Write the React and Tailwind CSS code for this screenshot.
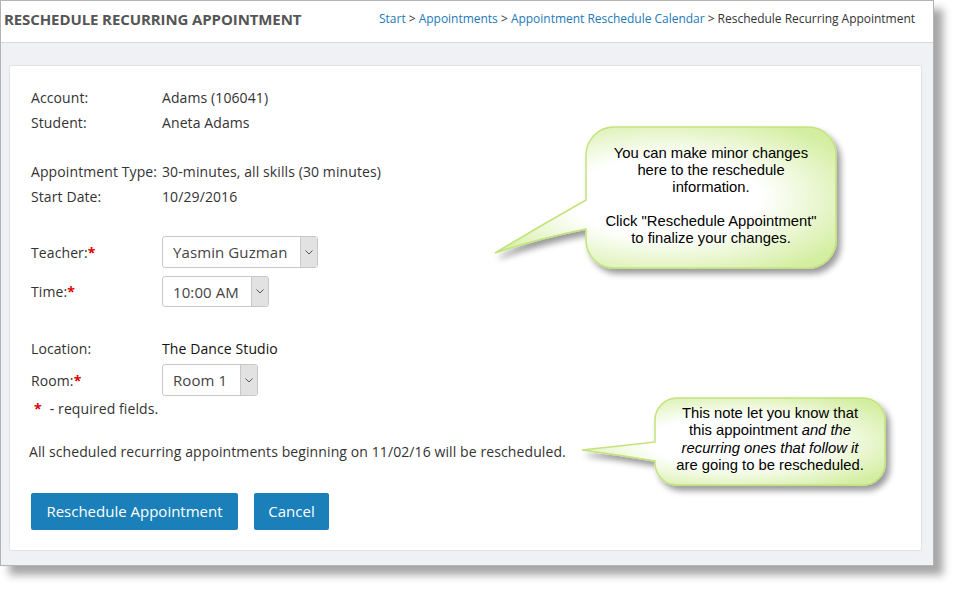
const Chevron = () => (
  <svg width="8" height="5" viewBox="0 0 8 5" fill="none">
    <path d="M0.5 0.5L4 4L7.5 0.5" stroke="#555" strokeWidth="1" />
  </svg>
)

const Select = ({ value, width }) => (
  <div
    className="flex h-full border border-[#c8c8c8] rounded-[3px] bg-white overflow-hidden"
    style={{ width }}
  >
    <div className="flex-1 flex items-center pl-[10px] pt-[1px] text-[15px] text-[#444]">{value}</div>
    <div className="w-[17px] bg-[#e2e2e2] border-l border-[#c8c8c8] flex items-center justify-center">
      <Chevron />
    </div>
  </div>
)

const Req = () => <span className="text-[#e00000] font-bold">*</span>

const Row = ({ label, children, className = 'h-[25px]' }) => (
  <div className={`flex items-center ${className}`}>
    <div className="w-[131px] shrink-0">{label}</div>
    <div className="h-full flex items-center">{children}</div>
  </div>
)

const Bubbles = () => (
  <svg className="absolute left-0 top-0 pointer-events-none" width="958" height="590">
    <defs>
      <radialGradient id="bubbleFill" cx="50%" cy="50%" r="62%">
        <stop offset="0.45" stopColor="#ffffff" />
        <stop offset="1" stopColor="#d3eea0" />
      </radialGradient>
      <filter id="bubbleShadow" x="-20%" y="-20%" width="140%" height="150%">
        <feDropShadow dx="4" dy="5" stdDeviation="3" floodColor="#000" floodOpacity="0.4" />
      </filter>
    </defs>
    <path
      d="M614 127 H808 A28 28 0 0 1 836 155 V240 A28 28 0 0 1 808 268 H614 A28 28 0 0 1 586 240 V229 Q540 238 495 253 Q540 226 586 200 V155 A28 28 0 0 1 614 127 Z"
      fill="url(#bubbleFill)"
      stroke="#c4e37c"
      strokeWidth="1.5"
      filter="url(#bubbleShadow)"
    />
    <path
      d="M677 398 H863 A22 22 0 0 1 885 420 V463 A22 22 0 0 1 863 485 H677 A22 22 0 0 1 655 463 V461 Q620 455 582 450 Q620 446 655 442 V420 A22 22 0 0 1 677 398 Z"
      fill="url(#bubbleFill)"
      stroke="#c4e37c"
      strokeWidth="1.5"
      filter="url(#bubbleShadow)"
    />
  </svg>
)

const App = () => {
  return (
    <div className="relative w-[958px] h-[590px] bg-white font-['Open_Sans',sans-serif] text-[14px] text-[#333]">
      <div className="w-[934px] h-[566px] border border-[#b4b4b4] bg-[#f0f1f5] flex flex-col shadow-[9px_9px_8px_rgba(0,0,0,0.35)]">
        {/* Header */}
        <div className="h-[42px] shrink-0 bg-white border-b border-[#d6d9de] flex items-start justify-between pt-[7px] pl-[3px] pr-[18px]">
          <h1 className="text-[15px] font-bold text-[#555] tracking-[-0.1px]">RESCHEDULE RECURRING APPOINTMENT</h1>
          <div className="text-[12px] text-[#333] pt-[2px] tracking-[-0.02px]">
            <a className="text-[#2279b8]">Start</a> &gt; <a className="text-[#2279b8]">Appointments</a> &gt;{' '}
            <a className="text-[#2279b8]">Appointment Reschedule Calendar</a> &gt; Reschedule Recurring Appointment
          </div>
        </div>

        {/* Body */}
        <div className="flex-1 pt-[22px] pl-[8px] pr-[11px] pb-[14px]">
          <div className="h-full bg-white border border-[#e0e2e7] rounded-[2px] pl-[21px] pt-[19px] tracking-[0.1px]">
            <Row label="Account:">Adams (106041)</Row>
            <Row label="Student:">Aneta Adams</Row>
            <div className="h-[24px]" />
            <Row label="Appointment Type:">30-minutes, all skills (30 minutes)</Row>
            <Row label="Start Date:">10/29/2016</Row>
            <div className="h-[27px]" />
            <Row label={<>Teacher:<Req /></>} className="h-[32px]">
              <Select value="Yasmin Guzman" width={156} />
            </Row>
            <div className="h-[8px]" />
            <Row label={<>Time:<Req /></>} className="h-[31px]">
              <Select value="10:00 AM" width={107} />
            </Row>
            <div className="h-[29px]" />
            <Row label="Location:">
              <span className="text-[#111]">The Dance Studio</span>
            </Row>
            <div className="h-[3px]" />
            <Row label={<>Room:<Req /></>} className="h-[32px]">
              <Select value="Room 1" width={96} />
            </Row>
            <div className="h-[20px] mt-[2px] flex items-center pl-[3px]">
              <Req />
              <span className="ml-[8px]">- required fields.</span>
            </div>
            <div className="h-[22px]" />
            <div className="h-[22px] flex items-center -ml-[2px]">
              All scheduled recurring appointments beginning on 11/02/16 will be rescheduled.
            </div>
            <div className="h-[31px]" />
            <div className="flex gap-[16px]">
              <button className="h-[37px] w-[207px] bg-[#1b80b9] text-white text-[15px] tracking-normal rounded-[2px]">
                Reschedule Appointment
              </button>
              <button className="h-[37px] w-[75px] bg-[#1b80b9] text-white text-[15px] tracking-normal rounded-[2px]">
                Cancel
              </button>
            </div>
          </div>
        </div>
      </div>

      <Bubbles />

      {/* Callout text */}
      <div className="absolute left-[586px] top-[145px] w-[250px] text-center font-['Liberation_Sans',Arial,sans-serif] text-[14.8px] leading-[17px] text-black">
        <p>You can make minor changes</p>
        <p>here to the reschedule</p>
        <p>information.</p>
        <p className="mt-[17px]">Click "Reschedule Appointment"</p>
        <p>to finalize your changes.</p>
      </div>
      <div className="absolute left-[655px] top-[405px] w-[230px] text-center font-['Liberation_Sans',Arial,sans-serif] text-[14.8px] leading-[17.3px] text-black">
        <p>This note let you know that</p>
        <p>
          this appointment <i>and the</i>
        </p>
        <p>
          <i>recurring ones that follow it</i>
        </p>
        <p>are going to be rescheduled.</p>
      </div>
    </div>
  )
}

export default App
